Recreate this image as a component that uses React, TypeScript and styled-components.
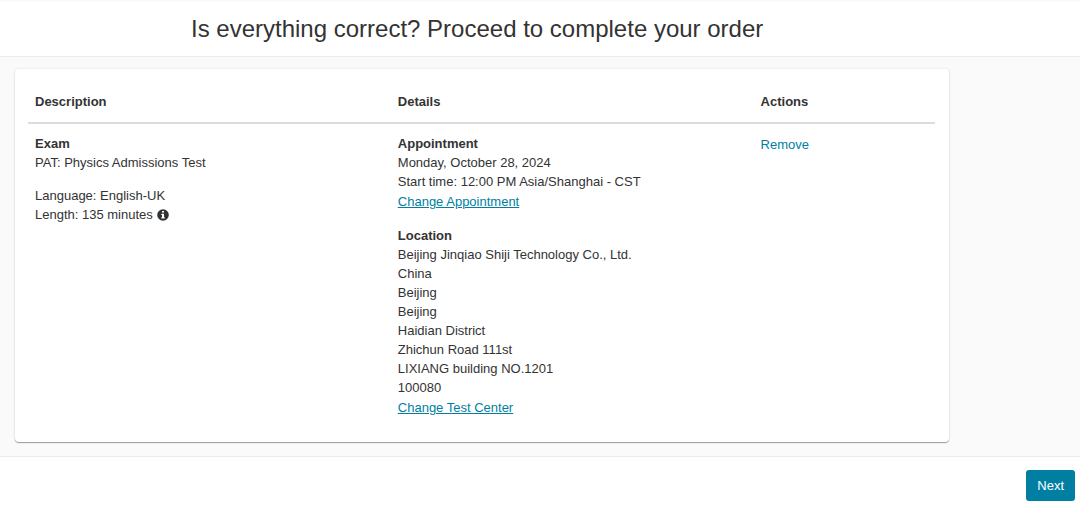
import React from "react";
import styled, { createGlobalStyle } from "styled-components";

const GlobalStyle = createGlobalStyle`
  * { box-sizing: border-box; }
  body {
    margin: 0;
    background: #fff;
    color: #333;
    font: 13px/19px "Liberation Sans", Arial, sans-serif;
  }
`;

const Header = styled.header`
  padding: 0 191px;
  border-top: 2px solid #fafafa;
  border-bottom: 1px solid #ebebeb;
`;

const Title = styled.h1`
  margin: 0;
  font-size: 24px;
  font-weight: 400;
  line-height: 54px;
  white-space: nowrap;
`;

const Main = styled.main`
  padding: 12px 131px 14px 15px;
  background: #fafafa;
  border-bottom: 1px solid #ebebeb;
`;

const Card = styled.section`
  padding: 13px 14px 24px 13px;
  background: #fff;
  border-radius: 4px;
  box-shadow: 0 1px 1px rgba(0, 0, 0, 0.35), 0 0 3px rgba(0, 0, 0, 0.1);
`;

const OrderTable = styled.table`
  width: 100%;
  table-layout: fixed;
  border-collapse: collapse;
`;

const HeadCell = styled.th<{ $width: string }>`
  width: ${(p) => p.$width};
  padding: 10px 7px 11px;
  border-bottom: 2px solid #dcdcdc;
  text-align: left;
`;

const Cell = styled.td`
  padding: 10px 7px 0;
  vertical-align: top;
`;

const Block = styled.div`
  margin-bottom: 14px;
`;

const Line = styled.div`
  min-height: 19px;
`;

const LinkLine = styled.div`
  line-height: 21px;
`;

const Label = styled.h2`
  margin: 0;
  font-size: 13px;
  line-height: 19px;
`;

const Link = styled.a`
  color: #007fa3;
  text-decoration: underline;
`;

const RemoveButton = styled.button`
  padding: 0;
  border: 0;
  background: none;
  color: #007fa3;
  font: inherit;
  line-height: 21px;
  cursor: pointer;
`;

const InfoIcon = styled.svg`
  width: 12px;
  height: 12px;
  margin-left: 1px;
  vertical-align: -2px;
`;

const Footer = styled.footer`
  display: flex;
  justify-content: flex-end;
  padding: 13px 5px 6px;
`;

const NextButton = styled.button`
  padding: 6px 11px;
  border: 0;
  border-radius: 3px;
  background: #007fa3;
  color: #fff;
  font: inherit;
  cursor: pointer;
`;

const address = [
  "Beijing Jinqiao Shiji Technology Co., Ltd.",
  "China",
  "Beijing",
  "Beijing",
  "Haidian District",
  "Zhichun Road 111st",
  "LIXIANG building NO.1201",
  "100080",
];

export default function App() {
  return (
    <>
      <GlobalStyle />
      <Header>
        <Title>Is everything correct? Proceed to complete your order</Title>
      </Header>
      <Main>
        <Card>
          <OrderTable>
            <thead>
              <tr>
                <HeadCell $width="40%">Description</HeadCell>
                <HeadCell $width="40%">Details</HeadCell>
                <HeadCell $width="20%">Actions</HeadCell>
              </tr>
            </thead>
            <tbody>
              <tr>
                <Cell>
                  <Block>
                    <Label>Exam</Label>
                    <Line>PAT: Physics Admissions Test</Line>
                  </Block>
                  <Line>Language: English-UK</Line>
                  <Line>
                    Length: 135 minutes{" "}
                    <InfoIcon viewBox="0 0 12 12" role="img" aria-label="More information">
                      <circle cx="6" cy="6" r="5.8" fill="#333" />
                      <path d="M5 2h2v1.6H5zM4.3 4.7H7v3.5h.8v1.4H4.3V8.2H5V6h-.7z" fill="#fff" />
                    </InfoIcon>
                  </Line>
                </Cell>
                <Cell>
                  <Block>
                    <Label>Appointment</Label>
                    <Line>Monday, October 28, 2024</Line>
                    <Line>Start time: 12:00 PM Asia/Shanghai - CST</Line>
                    <LinkLine>
                      <Link href="#appointment">Change Appointment</Link>
                    </LinkLine>
                  </Block>
                  <Label>Location</Label>
                  {address.map((line, i) => (
                    <Line key={i}>{line}</Line>
                  ))}
                  <LinkLine>
                    <Link href="#test-center">Change Test Center</Link>
                  </LinkLine>
                </Cell>
                <Cell>
                  <RemoveButton type="button">Remove</RemoveButton>
                </Cell>
              </tr>
            </tbody>
          </OrderTable>
        </Card>
      </Main>
      <Footer>
        <NextButton type="button">Next</NextButton>
      </Footer>
    </>
  );
}
